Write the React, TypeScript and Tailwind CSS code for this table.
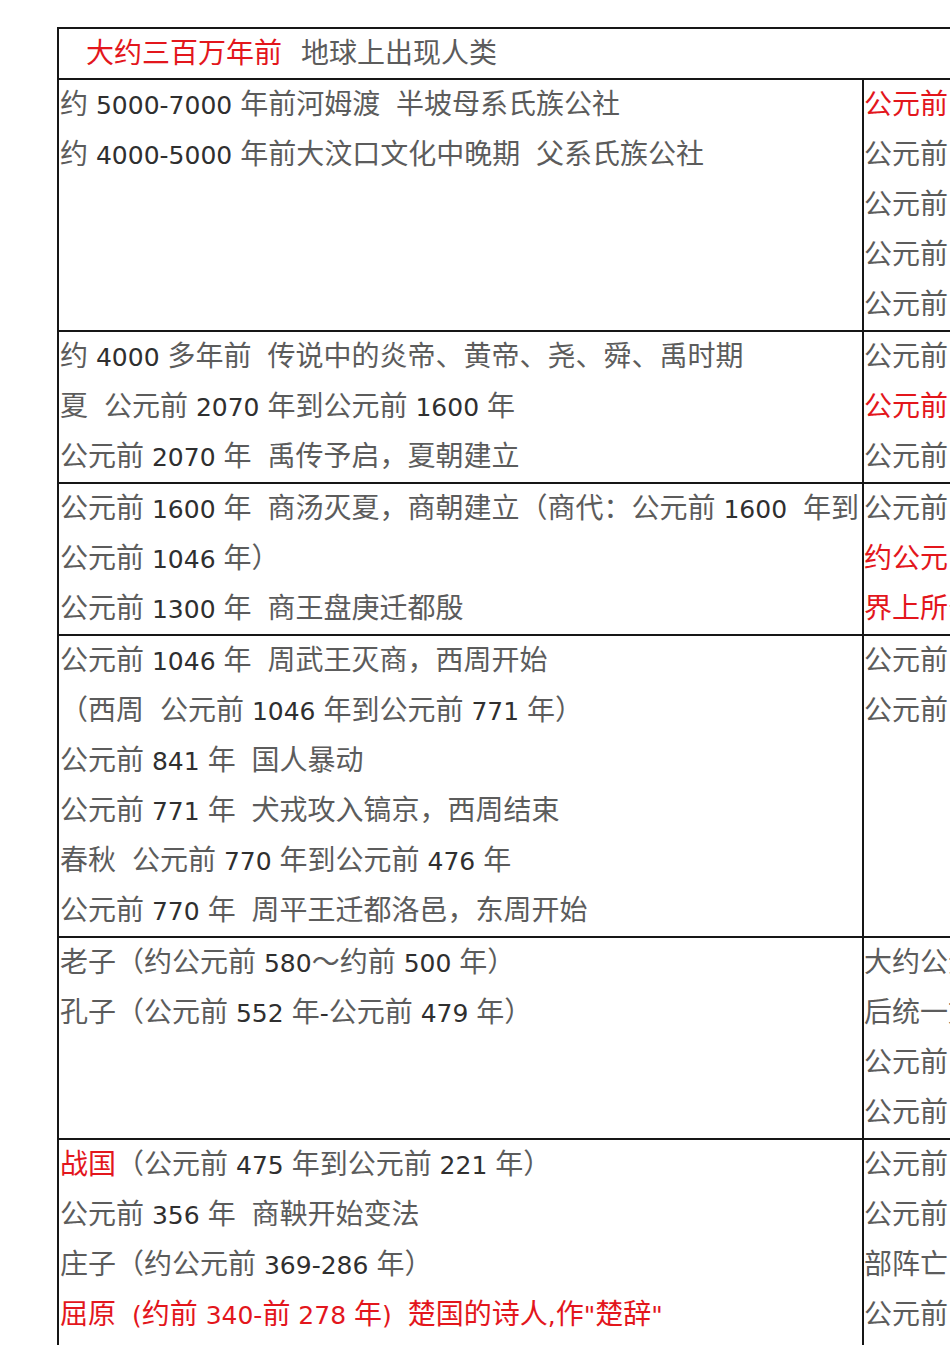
import { clsx } from 'clsx'

type Seg = { t: string; red?: boolean }
type Line = Seg[]

const g = (t: string): Line => [{ t }]
const r = (t: string): Line => [{ t, red: true }]

// one table row: left column lines, right column lines (right side runs off the page)
const ROWS: { left: Line[]; right: Line[] }[] = [
  {
    left: [
      g('约 5000-7000 年前河姆渡  半坡母系氏族公社'),
      g('约 4000-5000 年前大汶口文化中晚期  父系氏族公社'),
    ],
    right: [
      r('公元前 221 年  秦统一六国，建立秦朝'),
      g('公元前 209 年  陈胜吴广起义'),
      g('公元前 202 年  刘邦建立西汉'),
      g('公元前 138 年  张骞出使西域'),
      g('公元前 119 年  卫青、霍去病大败匈奴'),
    ],
  },
  {
    left: [
      g('约 4000 多年前  传说中的炎帝、黄帝、尧、舜、禹时期'),
      g('夏  公元前 2070 年到公元前 1600 年'),
      g('公元前 2070 年  禹传予启，夏朝建立'),
    ],
    right: [
      g('公元前 60 年  西汉设置西域都护'),
      r('公元前 33 年  昭君出塞'),
      g('公元前 2 年  佛教传入中国'),
    ],
  },
  {
    left: [
      g('公元前 1600 年  商汤灭夏，商朝建立（商代：公元前 1600  年到'),
      g('公元前 1046 年）'),
      g('公元前 1300 年  商王盘庚迁都殷'),
    ],
    right: [
      g('公元前 1 世纪  《九章算术》成书'),
      r('约公元 105 年  蔡伦改进造纸术，是世'),
      r('界上所公认的造纸术的发明者'),
    ],
  },
  {
    left: [
      g('公元前 1046 年  周武王灭商，西周开始'),
      g('（西周  公元前 1046 年到公元前 771 年）'),
      g('公元前 841 年  国人暴动'),
      g('公元前 771 年  犬戎攻入镐京，西周结束'),
      g('春秋  公元前 770 年到公元前 476 年'),
      g('公元前 770 年  周平王迁都洛邑，东周开始'),
    ],
    right: [g('公元前 651 年  齐桓公称霸'), g('公元前 632 年  晋楚城濮之战')],
  },
  {
    left: [
      g('老子（约公元前 580～约前 500 年）'),
      g('孔子（公元前 552 年-公元前 479 年）'),
    ],
    right: [
      g('大约公元前 221 年，秦灭六国'),
      g('后统一文字、货币和度量衡'),
      g('公元前 214 年  修筑长城'),
      g('公元前 206 年  秦朝灭亡'),
    ],
  },
  {
    left: [
      [{ t: '战国', red: true }, { t: '（公元前 475 年到公元前 221 年）' }],
      g('公元前 356 年  商鞅开始变法'),
      g('庄子（约公元前 369-286 年）'),
      r('屈原  (约前 340-前 278 年)  楚国的诗人,作"楚辞"'),
      g('公元前 260 年  长平之战'),
    ],
    right: [
      g('公元前 260 年  长平之战，赵军四十万'),
      g('公元前 256 年  李冰修都江堰'),
      g('部阵亡'),
      g('公元前 230 年  秦灭韩'),
      g('公元前 221 年  秦统一六国'),
    ],
  },
]

function Segment({ t, red }: Seg) {
  // latin runs (digits, dashes, spaces) are a touch smaller and darker than the CJK text
  const parts = t.split(/([\x20-\x7e]+)/)
  return (
    <>
      {parts.map((p, i) =>
        i % 2 ? (
          <span key={i} className={clsx('text-[25px]', red ? 'text-[#e3161c]' : 'text-[#2f2f2f]')}>
            {p}
          </span>
        ) : (
          <span key={i} className={red ? 'text-[#e3161c]' : 'text-[#5c5c5c]'}>
            {p}
          </span>
        ),
      )}
    </>
  )
}

function TextLine({ line }: { line: Line }) {
  return (
    <div className="h-[50px] leading-[50px] whitespace-pre">
      {line.map((s, i) => (
        <Segment key={i} {...s} />
      ))}
    </div>
  )
}

export default function App() {
  return (
    <div className="w-[950px] h-[1345px] overflow-hidden bg-white font-['DejaVu_Sans','Noto_Sans_CJK_SC',sans-serif] text-[28px]">
      <div className="ml-[57px] mt-[27px] w-[1200px] border-l-2 border-t-2 border-[#161616]">
        {/* Title row */}
        <div className="h-[51px] border-b-2 border-[#161616] pl-[27px] text-[28px] leading-[49px] whitespace-nowrap">
          <span className="text-[#e3161c]">大约三百万年前</span>
          <span className="ml-[19px] text-[#5c5c5c]">地球上出现人类</span>
        </div>

        {ROWS.map((row, i) => (
          <div key={i} className="flex border-b-2 border-[#161616]">
            <div className="w-[805px] shrink-0 border-r-2 border-[#161616] pl-px">
              {row.left.map((l, j) => (
                <TextLine key={j} line={l} />
              ))}
            </div>
            <div className="flex-1 overflow-hidden">
              {row.right.map((l, j) => (
                <TextLine key={j} line={l} />
              ))}
            </div>
          </div>
        ))}
      </div>
    </div>
  )
}
